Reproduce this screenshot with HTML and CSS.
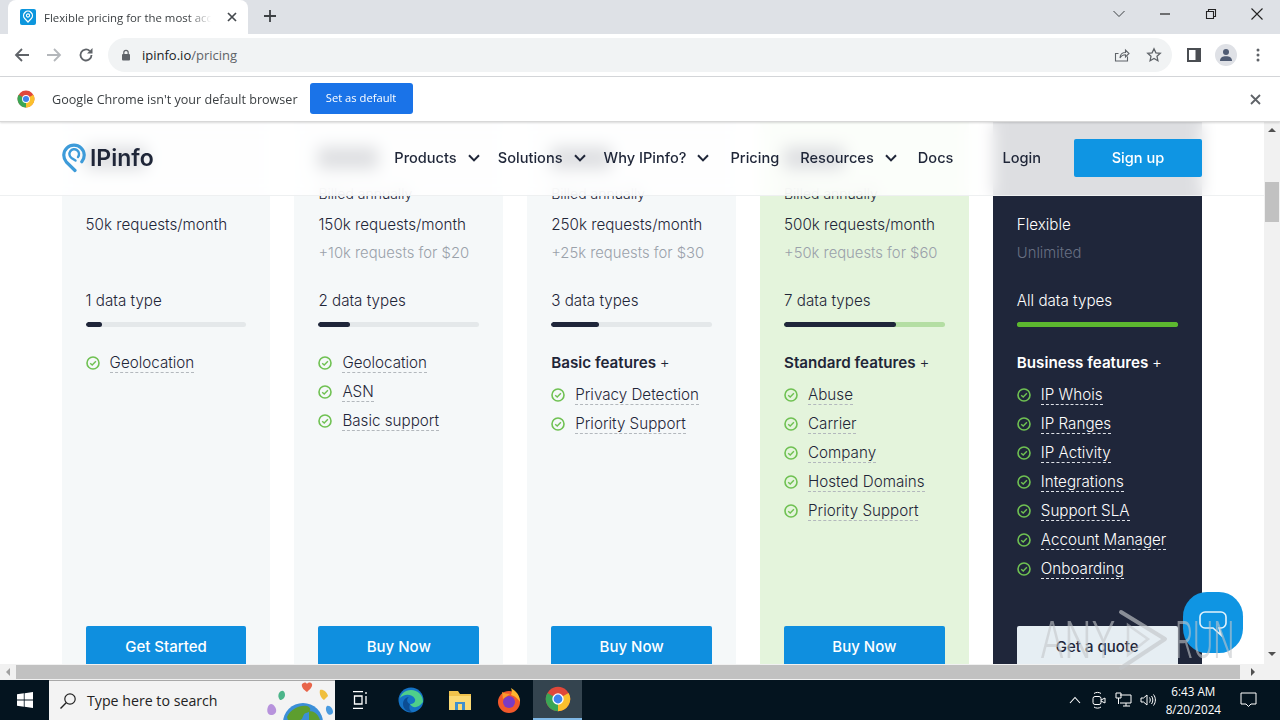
FILE: index.html
```html
<!DOCTYPE html>
<html lang="en">
<head>
    <meta charset="UTF-8">
    <title>Flexible pricing for the most accurate IP data</title>
    <link rel="stylesheet" href="styles.css">
</head>
<body>

<svg class="defs" width="0" height="0">
    <defs>
        <symbol id="chev" viewBox="0 0 12 8"><path d="M1 1.2 6 6.4l5-5.2" fill="none" stroke="currentColor" stroke-width="2"/></symbol>
        <symbol id="check" viewBox="0 0 14 14"><circle cx="7" cy="7" r="6" fill="none" stroke="#6fc152" stroke-width="1.6"/><path d="M4.2 7.2 6.2 9.1 9.9 5.2" fill="none" stroke="#6fc152" stroke-width="1.4"/></symbol>
        <symbol id="chrome" viewBox="0 0 32 32">
            <circle cx="16" cy="16" r="15" fill="#e0483a"/>
            <path d="M16 16 29 8.5A15 15 0 0 1 16 31Z" fill="#fbc02d"/>
            <path d="M16 16 16 31A15 15 0 0 1 3 8.5Z" fill="#3aa655"/>
            <circle cx="16" cy="16" r="7" fill="#fff"/>
            <circle cx="16" cy="16" r="5.4" fill="#3f83ee"/>
        </symbol>
    </defs>
</svg>

<!-- browser chrome -->
<div class="tabstrip">
    <div class="tab">
        <span class="favicon">
            <svg width="16" height="16" viewBox="0 0 16 16"><path d="M8 13 4.8 9.6a4.4 4.4 0 1 1 6.4 0Z" fill="none" stroke="#fff" stroke-width="1.3"/><circle cx="8" cy="6.5" r="1.6" fill="none" stroke="#fff" stroke-width="1.1"/></svg>
        </span>
        <span class="tab-title">Flexible pricing for the most accurate IP data</span>
        <svg class="tab-close" width="10" height="10" viewBox="0 0 10 10"><path d="M1 1l8 8M9 1 1 9" stroke="#45494e" stroke-width="1.7"/></svg>
    </div>
    <svg class="tab-new" width="14" height="14" viewBox="0 0 14 14"><path d="M7 1v12M1 7h12" stroke="#3c4043" stroke-width="1.8"/></svg>
    <div class="win-btns">
        <svg width="14" height="14" viewBox="0 0 14 14"><path d="M1.5 4 7 9.500 12.500 4" fill="none" stroke="#3c4043" stroke-width="1"/></svg>
        <svg width="14" height="14" viewBox="0 0 14 14"><path d="M2 7h10" stroke="#222" stroke-width="1.2"/></svg>
        <svg width="14" height="14" viewBox="0 0 14 14"><path d="M2.500 4.500h7v7h-7zM4.500 4.500v-2h7v7h-2" fill="none" stroke="#222" stroke-width="1.1"/></svg>
        <svg width="14" height="14" viewBox="0 0 14 14"><path d="M1.500 1.500l11 11M12.500 1.500l-11 11" stroke="#222" stroke-width="1.1"/></svg>
    </div>
</div>

<div class="toolbar">
    <svg class="tool" width="16" height="16" viewBox="0 0 16 16"><path d="M15 8H2M8 2 2 8l6 6" fill="none" stroke="#5f6368" stroke-width="1.800"/></svg>
    <svg class="tool" width="16" height="16" viewBox="0 0 16 16"><path d="M1 8h13M8 2l6 6-6 6" fill="none" stroke="#b4b7bb" stroke-width="1.800"/></svg>
    <svg class="tool" width="16" height="16" viewBox="0 0 16 16"><path d="M13.500 8A5.500 5.500 0 1 1 11.700 3.900" fill="none" stroke="#5f6368" stroke-width="1.800"/><path d="M14.500 1v5.500H9z" fill="#5f6368"/></svg>
    <div class="omnibox">
        <svg width="12" height="12" viewBox="0 0 12 12"><rect x="2" y="5" width="8" height="6.500" rx="1" fill="#5f6368"/><path d="M3.800 5V3.500a2.200 2.200 0 0 1 4.400 0V5" fill="none" stroke="#5f6368" stroke-width="1.200"/></svg>
        <span class="url">ipinfo.io<span class="url-path">/pricing</span></span>
        <svg class="omni-share" width="16" height="16" viewBox="0 0 16 16"><path d="M13.500 9.500v4.500h-12V6.500h3M6 11c0-4 3-5.500 5.500-5.500V3L15 6.500 11.500 10V7.800C9 7.800 7 9 6 11Z" fill="none" stroke="#5f6368" stroke-width="1.100"/></svg>
        <svg width="16" height="16" viewBox="0 0 16 16"><path d="M8 1.800l1.900 4 4.400.5-3.300 3 .9 4.400L8 11.500l-3.900 2.200.9-4.400-3.300-3 4.400-.5Z" fill="none" stroke="#5f6368" stroke-width="1.300"/></svg>
    </div>
    <svg class="tool-panel" width="14" height="14" viewBox="0 0 14 14"><path d="M0 0h14v14H0z" fill="#4a4d52"/><path d="M2 2h6.500v10H2z" fill="#fff"/></svg>
    <span class="avatar">
        <svg width="14" height="14" viewBox="0 0 14 14"><circle cx="7" cy="4" r="3" fill="#4f5b73"/><path d="M1 13c0-3.500 2.500-4.700 6-4.700s6 1.200 6 4.700z" fill="#4f5b73"/></svg>
    </span>
    <svg class="tool-menu" width="4" height="14" viewBox="0 0 4 14"><circle cx="2" cy="2" r="1.500" fill="#5f6368"/><circle cx="2" cy="7" r="1.500" fill="#5f6368"/><circle cx="2" cy="12" r="1.500" fill="#5f6368"/></svg>
</div>

<div class="infobar">
    <svg class="info-logo" width="18" height="18"><use href="#chrome"/></svg>
    <span class="info-text">Google Chrome isn't your default browser</span>
    <span class="info-btn">Set as default</span>
    <svg class="info-close" width="11" height="11" viewBox="0 0 11 11"><path d="M1 1l9 9M10 1l-9 9" stroke="#5f6368" stroke-width="1.800"/></svg>
</div>

<!-- page -->
<div class="viewport">
    <div class="page">
        <div class="plans">
            <div class="plan">
                <div class="price"></div>
                <div class="billed"></div>
                <div class="quota">50k requests/month</div>
                <div class="quota quota-extra"></div>
                <div class="types">1 data type</div>
                <div class="bar"><div class="bar-fill" style="width: 16px"></div></div>
                <ul class="feats">
                    <li><svg width="14" height="14"><use href="#check"/></svg><span>Geolocation</span></li>
                </ul>
                <a class="buy">Get Started</a>
            </div>
            <div class="plan">
                <div class="price"></div>
                <div class="billed">Billed annually</div>
                <div class="quota">150k requests/month</div>
                <div class="quota quota-extra">+10k requests for $20</div>
                <div class="types">2 data types</div>
                <div class="bar"><div class="bar-fill" style="width: 32px"></div></div>
                <ul class="feats">
                    <li><svg width="14" height="14"><use href="#check"/></svg><span>Geolocation</span></li>
                    <li><svg width="14" height="14"><use href="#check"/></svg><span>ASN</span></li>
                    <li><svg width="14" height="14"><use href="#check"/></svg><span>Basic support</span></li>
                </ul>
                <a class="buy">Buy Now</a>
            </div>
            <div class="plan">
                <div class="price"></div>
                <div class="billed">Billed annually</div>
                <div class="quota">250k requests/month</div>
                <div class="quota quota-extra">+25k requests for $30</div>
                <div class="types">3 data types</div>
                <div class="bar"><div class="bar-fill" style="width: 48px"></div></div>
                <div class="feat-title">Basic features <i>+</i></div>
                <ul class="feats feats-after">
                    <li><svg width="14" height="14"><use href="#check"/></svg><span>Privacy Detection</span></li>
                    <li><svg width="14" height="14"><use href="#check"/></svg><span>Priority Support</span></li>
                </ul>
                <a class="buy">Buy Now</a>
            </div>
            <div class="plan plan-green">
                <div class="price"></div>
                <div class="billed">Billed annually</div>
                <div class="quota">500k requests/month</div>
                <div class="quota quota-extra">+50k requests for $60</div>
                <div class="types">7 data types</div>
                <div class="bar"><div class="bar-fill" style="width: 112px"></div></div>
                <div class="feat-title">Standard features <i>+</i></div>
                <ul class="feats feats-after">
                    <li><svg width="14" height="14"><use href="#check"/></svg><span>Abuse</span></li>
                    <li><svg width="14" height="14"><use href="#check"/></svg><span>Carrier</span></li>
                    <li><svg width="14" height="14"><use href="#check"/></svg><span>Company</span></li>
                    <li><svg width="14" height="14"><use href="#check"/></svg><span>Hosted Domains</span></li>
                    <li><svg width="14" height="14"><use href="#check"/></svg><span>Priority Support</span></li>
                </ul>
                <a class="buy">Buy Now</a>
            </div>
            <div class="plan plan-dark">
                <div class="price"></div>
                <div class="billed"></div>
                <div class="quota">Flexible</div>
                <div class="quota quota-extra">Unlimited</div>
                <div class="types">All data types</div>
                <div class="bar"><div class="bar-fill" style="width: 100%"></div></div>
                <div class="feat-title">Business features <i>+</i></div>
                <ul class="feats feats-after">
                    <li><svg width="14" height="14"><use href="#check"/></svg><span>IP Whois</span></li>
                    <li><svg width="14" height="14"><use href="#check"/></svg><span>IP Ranges</span></li>
                    <li><svg width="14" height="14"><use href="#check"/></svg><span>IP Activity</span></li>
                    <li><svg width="14" height="14"><use href="#check"/></svg><span>Integrations</span></li>
                    <li><svg width="14" height="14"><use href="#check"/></svg><span>Support SLA</span></li>
                    <li><svg width="14" height="14"><use href="#check"/></svg><span>Account Manager</span></li>
                    <li><svg width="14" height="14"><use href="#check"/></svg><span>Onboarding</span></li>
                </ul>
                <a class="buy">Get a quote</a>
            </div>
        </div>

        <div class="site-head">
            <div class="logo">
                <svg width="24" height="30" viewBox="0 0 24 30"><path d="M13 27.500 4.200 18.800a10.200 10.200 0 1 1 15.600 0" fill="none" stroke="#3d9bd9" stroke-width="3.200" stroke-linecap="round"/><path d="M13.500 17.500 9.500 15a4.800 4.800 0 1 1 6.500-1" fill="none" stroke="#3d9bd9" stroke-width="2.400" stroke-linecap="round"/></svg>
                <span>IPinfo</span>
            </div>
            <nav class="nav">
                <a class="nav-tight">Products<svg width="12" height="8"><use href="#chev"/></svg></a>
                <a class="nav-tight">Solutions<svg width="12" height="8"><use href="#chev"/></svg></a>
                <a>Why IPinfo?<svg width="12" height="8"><use href="#chev"/></svg></a>
                <a>Pricing</a>
                <a>Resources<svg width="12" height="8"><use href="#chev"/></svg></a>
                <a>Docs</a>
                <a class="login">Login</a>
                <a class="signup">Sign up</a>
            </nav>
        </div>

        <div class="chat">
            <svg width="32" height="32" viewBox="0 0 32 32"><path d="M8 5h16a5 5 0 0 1 5 5v6a5 5 0 0 1-5 5h-2l2 7-8-7H8a5 5 0 0 1-5-5v-6a5 5 0 0 1 5-5Z" fill="none" stroke="#e4f3fc" stroke-width="1.600"/></svg>
        </div>
    </div>
    <div class="vscroll">
        <i class="arrow-up"></i>
        <i class="vthumb"></i>
        <i class="arrow-down"></i>
    </div>
</div>

<div class="hscroll">
    <i class="arrow-left"></i>
    <i class="hthumb"></i>
    <i class="arrow-right"></i>
</div>

<!-- taskbar -->
<div class="taskbar">
    <span class="start">
        <svg width="16" height="16" viewBox="0 0 16 16"><path d="M0 2.300 6.800 1.300v6.300H0zM7.600 1.200 16 0v7.600H7.600zM0 8.400h6.800v6.300L0 13.700zM7.600 8.400H16V16l-8.400-1.200z" fill="#fff"/></svg>
    </span>
    <div class="search">
        <svg width="18" height="18" viewBox="0 0 18 18"><circle cx="11" cy="7" r="5.200" fill="none" stroke="#222" stroke-width="1.200"/><path d="M7.200 10.800 1.500 16.500" stroke="#222" stroke-width="1.400"/></svg>
        <span>Type here to search</span>
        <svg class="search-art" width="74" height="39" viewBox="0 0 74 39">
            <circle cx="42" cy="42" r="20" fill="#3b8fd8"/>
            <path d="M26 36c4-8 12-12 20-11 5 2 4 6-1 7-4 1-2 6-6 7H27Z" fill="#5d9e2f"/>
            <path d="M48 30c5 0 9 3 11 9H48Z" fill="#5d9e2f"/>
            <path d="M41 3c2-2 4-2 5 0 1-2 4-2 5 0 1 3-3 6-5 8-3-2-6-5-5-8Z" fill="#e8654a"/>
            <path d="M18 12c3-4 6-2 6 2 0 3-3 5-5 5-2-2-2-5-1-7Z" fill="#4cb58a"/>
            <path d="M59 9c3-1 7 2 8 6l-4 4c-3-2-5-6-4-10Z" fill="#f0bf3c"/>
            <path d="M8 24c3-3 6 1 7 4 1 4-2 6-5 6-4 0-5-6-2-10Z" fill="#b792dc"/>
            <path d="M66 25c3-1 6 3 6 6 0 2-3 4-5 2-2-2-3-6-1-8Z" fill="#4a9be0"/>
        </svg>
    </div>
    <span class="task task-view">
        <svg width="16" height="18" viewBox="0 0 16 18"><path d="M1 .500h10M1 17.500h10M2.500 5h7.500v8H2.500zM14 1v2M14 5v8" fill="none" stroke="#fff" stroke-width="1.300"/></svg>
    </span>
    <span class="task">
        <svg width="26" height="26" viewBox="0 0 26 26"><circle cx="13" cy="13" r="12.500" fill="#1573c5"/><path d="M25 15c0-7-5-12-12-12C7 3 3 7 2 11c3-4 12-5 15 1 1 3-2 5-5 5 2 4 8 5 13-2Z" fill="#4fcf8a"/><path d="M12 17c-3-1-4-5-1-7-3 0-6 3-6 7 0 4 3 8 9 8-3-2-3-5-2-8Z" fill="#0b4d94"/></svg>
    </span>
    <span class="task">
        <svg width="24" height="22" viewBox="0 0 24 22"><path d="M1 2h9l2 3h11v16H1Z" fill="#f0c24c"/><path d="M1 7h22v14H1Z" fill="#fbd974"/><path d="M7 13h10v8H7Z" fill="#3f8fcd"/><path d="M10 15h4v6h-4Z" fill="#fbd974"/></svg>
    </span>
    <span class="task">
        <svg width="26" height="26" viewBox="0 0 26 26"><circle cx="13" cy="15" r="11" fill="#f2592b"/><path d="M15 1c5 3 9 7 9 14-2-3-5-6-9-7 1-2 1-5 0-7Z" fill="#fdb52d"/><circle cx="13" cy="15" r="6" fill="#7a3bc4"/><path d="M6 5c2 1 5 2 8 2-2 2-5 3-7 5Z" fill="#f99b2d"/></svg>
    </span>
    <span class="task task-active">
        <svg width="26" height="26"><use href="#chrome"/></svg>
    </span>
    <div class="tray">
        <svg class="tray-caret" width="12" height="8" viewBox="0 0 12 8"><path d="M1 7 6 1.500 11 7" fill="none" stroke="#fff" stroke-width="1.100"/></svg>
        <svg width="16" height="18" viewBox="0 0 16 18"><rect x="2" y="5.500" width="8" height="8" rx="2" fill="none" stroke="#fff"/><path d="M10 9l4-2v5l-4-2M3 2.500c2-1.500 5-1.500 7 0M3 16c2 1.500 5 1.500 7 0" fill="none" stroke="#fff"/></svg>
        <svg width="17" height="16" viewBox="0 0 17 16"><path d="M5 3h11v8H5M8 14h7M11 11v3M1 1h5v5H1zM3.500 6v6" fill="none" stroke="#fff"/></svg>
        <svg width="16" height="14" viewBox="0 0 16 14"><path d="M1 5h2.500L7 2v10L3.500 9H1zM9.500 4.500c1 1.500 1 3.500 0 5M11.500 3c1.800 2.300 1.800 5.700 0 8M13.500 1.500c2.500 3.300 2.500 7.700 0 11" fill="none" stroke="#fff"/></svg>
        <div class="clock"><span>6:43 AM</span><span>8/20/2024</span></div>
        <svg class="notif" width="17" height="16" viewBox="0 0 17 16"><path d="M1 1h15v11h-5l-2.500 2.500L6 12H1Z" fill="none" stroke="#fff"/></svg>
    </div>
</div>

<!-- sandbox watermark -->
<div class="watermark">
    <span class="wm-any">ANY</span>
    <svg width="50" height="62" viewBox="0 0 50 62"><path d="M3 3 47 30 3 59" fill="none" stroke="rgba(195,198,202,.65)" stroke-width="4" stroke-linejoin="round" stroke-linecap="round"/><path d="M10 16 30 30 10 46Z" fill="none" stroke="rgba(195,198,202,.5)" stroke-width="2.500"/></svg>
    <span class="wm-run">RUN</span>
</div>

</body>
</html>
```

FILE: styles.css
```css
* { box-sizing: border-box; }
html, body { margin: 0; height: 720px; overflow: hidden; }
body {
    display: flex;
    flex-direction: column;
    position: relative;
    background: #fff;
    font-family: "Inter", "Liberation Sans", sans-serif;
    color: #1f2638;
}
.defs { position: absolute; }

/* browser chrome */
.tabstrip {
    display: flex;
    align-items: flex-end;
    height: 34px;
    padding-left: 8px;
    background: #dee1e6;
    flex: none;
}
.tab {
    display: flex;
    align-items: center;
    width: 240px;
    height: 34px;
    padding: 0 11px 0 12px;
    background: #fff;
    border-radius: 8px 8px 0 0;
}
.favicon {
    display: flex;
    width: 16px;
    height: 16px;
    background: #0c96dd;
    border-radius: 2px;
    flex: none;
}
.tab-title {
    flex: 1;
    margin-left: 8px;
    overflow: hidden;
    white-space: nowrap;
    font: 11.400px "Open Sans", "Liberation Sans", sans-serif;
    color: #3c4043;
    -webkit-mask-image: linear-gradient(to right, #000 85%, transparent 99%);
    mask-image: linear-gradient(to right, #000 85%, transparent 99%);
}
.tab-close { margin-left: 14px; flex: none; }
.tab-new { margin: 0 0 11px 15px; }
.win-btns {
    display: flex;
    gap: 32px;
    margin: 0 16px 13px auto;
}
.toolbar {
    display: flex;
    align-items: center;
    height: 43px;
    padding-left: 14px;
    border-bottom: 1px solid #d5d7da;
    background: #fff;
    flex: none;
}
.tool { margin-right: 16px; }
.omnibox {
    display: flex;
    align-items: center;
    width: 1064px;
    height: 34px;
    margin-left: -2px;
    padding: 0 10px 0 12px;
    background: #f1f3f4;
    border-radius: 17px;
}
.url {
    margin-left: 10px;
    font: 13px "Open Sans", "Liberation Sans", sans-serif;
    color: #202124;
}
.url-path { color: #5f6368; }
.omni-share { margin: 0 16px 0 auto; }
.tool-panel { margin-left: 15px; }
.avatar {
    display: flex;
    align-items: center;
    justify-content: center;
    width: 22px;
    height: 22px;
    margin-left: 14px;
    background: #dfe1e6;
    border-radius: 50%;
}
.tool-menu { margin-left: 19px; }
.infobar {
    display: flex;
    align-items: center;
    height: 45px;
    padding-left: 17px;
    background: #fff;
    border-bottom: 1px solid #d8d8d8;
    box-shadow: 0 1px 2px rgba(0,0,0,.15);
    position: relative;
    z-index: 3;
    flex: none;
}
.info-text {
    margin-left: 17px;
    font: 12.600px "Open Sans", "Liberation Sans", sans-serif;
    color: #3c4043;
}
.info-btn {
    display: flex;
    align-items: center;
    justify-content: center;
    width: 103px;
    height: 31px;
    margin: -2px 0 0 12px;
    padding-bottom: 2px;
    background: #1a73e8;
    border-radius: 3px;
    color: #fff;
    font: 11.200px "Open Sans", "Liberation Sans", sans-serif;
}
.info-close { margin: 0 19px 0 auto; }

/* page */
.viewport {
    display: flex;
    height: 542px;
    flex: none;
}
.page {
    position: relative;
    width: 1264px;
    height: 542px;
    padding: 0 62.400px 0 61.600px;
    overflow: hidden;
}
.plans {
    display: grid;
    grid-template-columns: repeat(5, 1fr);
    gap: 24px;
}
.plan {
    display: flex;
    flex-direction: column;
    height: 570px;
    padding: 20px 24px 24px;
    background: #f5f8f9;
    font-weight: 300;
    font-size: 15.200px;
}
.plan-green { background: #e4f4dc; }
.plan-dark { background: #1f263a; color: #fff; }
/* price figure only ever shows as a smudge through the blurred header */
.price {
    width: 60px;
    height: 22px;
    margin: 5px 0;
    background: #1f2638;
}
.plan-dark .price { visibility: hidden; }
.billed { height: 20px; margin-top: 10px; font-size: 14px; line-height: 20px; }
.quota { height: 28px; line-height: 28px; white-space: nowrap; }
.billed + .quota { margin-top: 7px; }
.quota-extra { color: #9aa1aa; font-size: 14.800px; }
.plan-dark .quota-extra { color: #687083; }
.types { height: 28px; margin-top: 20px; line-height: 28px; }
.bar {
    height: 5px;
    margin-top: 7px;
    background: #e4e8ea;
    border-radius: 3px;
    overflow: hidden;
}
.bar-fill { height: 100%; background: #1f263a; border-radius: 3px; }
.plan-green .bar { background: #b4dea3; }
.plan-dark .bar { background: #5cb82f; }
.plan-dark .bar-fill { background: #5cb82f; }
.feat-title {
    height: 29px;
    margin-top: 21px;
    line-height: 29px;
    font-weight: 600;
    white-space: nowrap;
}
.feat-title i { font-style: normal; font-weight: 300; }
.feats {
    margin: 21px 0 0;
    padding: 0;
    list-style: none;
}
.feats-after { margin-top: 3px; }
.feats li {
    display: flex;
    align-items: center;
    height: 29px;
    gap: 10px;
}
.feats li span {
    line-height: 19px;
    border-bottom: 1px dashed #b3b8bd;
    white-space: nowrap;
}
.plan-dark .feats li span { border-bottom-color: #dfe2e8; }
.buy {
    display: flex;
    align-items: center;
    justify-content: center;
    flex: none;
    height: 42px;
    margin-top: auto;
    padding-bottom: 2px;
    background: #0f8fdf;
    border-radius: 2px;
    color: #fff;
    font-weight: 500;
    font-size: 15px;
}
.plan-dark .buy { background: #e6eef3; color: #1f263a; }

/* floating site header */
.site-head {
    position: absolute;
    left: 0;
    top: 0;
    right: 0;
    display: flex;
    align-items: center;
    height: 74px;
    padding: 0 62px 2px;
    background: rgba(255,255,255,.85);
    -webkit-backdrop-filter: blur(8px);
    backdrop-filter: blur(8px);
    border-bottom: 1px solid #eef0f1;
}
.logo {
    display: flex;
    align-items: center;
    font-size: 23px;
    font-weight: 600;
    color: #1f2638;
}
.logo svg { margin-right: 4px; }
.nav {
    display: flex;
    align-items: center;
    gap: 21px;
    margin-left: auto;
    font-size: 14.600px;
    font-weight: 500;
}
.nav a { display: flex; align-items: center; gap: 11px; }
.nav .nav-tight { margin-right: -3px; }
.nav .login { margin-left: 28px; }
.nav .signup {
    justify-content: center;
    width: 128px;
    height: 38px;
    margin-left: 12px;
    background: #0f95e3;
    border-radius: 2px;
    color: #fff;
}
.chat {
    position: absolute;
    left: 1183px;
    top: 470px;
    display: flex;
    align-items: center;
    justify-content: center;
    width: 60px;
    height: 61px;
    background: #0f95e3;
    border-radius: 40%;
}

/* scrollbars */
.vscroll {
    position: relative;
    width: 16px;
    background: #f1f1f1;
}
.vthumb {
    position: absolute;
    left: 1px;
    top: 60px;
    width: 14px;
    height: 40px;
    background: #c1c1c1;
}
.arrow-up, .arrow-down, .arrow-left, .arrow-right {
    position: absolute;
    width: 0;
    height: 0;
    border: 4px solid transparent;
}
.arrow-up { left: 4px; top: 2px; border-bottom-color: #505050; }
.arrow-down { left: 4px; bottom: 4px; border-top-color: #505050; }
.hscroll {
    position: relative;
    height: 16px;
    background: #f1f1f1;
    flex: none;
}
.hthumb {
    position: absolute;
    left: 16px;
    top: 1px;
    width: 1224px;
    height: 14px;
    background: #c1c1c1;
}
.arrow-left { left: 2px; top: 4px; border-right-color: #a0a0a0; }
.arrow-right { left: 1251px; top: 4px; border-left-color: #505050; }

/* taskbar */
.taskbar {
    display: flex;
    align-items: center;
    height: 40px;
    background: #04141f;
    color: #fff;
    flex: none;
}
.start {
    display: flex;
    align-items: center;
    justify-content: center;
    width: 49px;
    height: 40px;
}
.search {
    display: flex;
    align-items: center;
    width: 286px;
    height: 40px;
    padding-left: 10px;
    overflow: hidden;
    background: #f3f3f3;
    border-top: 1px solid #a8a8a8;
    color: #222;
    font: 14.200px "Open Sans", "Liberation Sans", sans-serif;
}
.search span { margin-left: 10px; }
.search-art { margin-left: auto; align-self: flex-end; }
.task {
    display: flex;
    align-items: center;
    justify-content: center;
    width: 49px;
    height: 40px;
}
.task-view { margin-right: 2px; }
.task-active { background: #34444f; border-bottom: 2px solid #7fb8e6; }
.tray {
    display: flex;
    align-items: center;
    margin-left: auto;
    gap: 8px;
}
.tray-caret { margin-right: 2px; }
.clock {
    display: flex;
    flex-direction: column;
    align-items: center;
    margin-left: 2px;
    font: 11.700px/18px "Open Sans", "Liberation Sans", sans-serif;
}
.notif { margin: 0 23px 0 11px; }

/* sandbox watermark */
.watermark {
    position: absolute;
    left: 1040px;
    top: 609px;
    display: flex;
    align-items: center;
    height: 62px;
    font: 300 50px/62px "Inter", sans-serif;
    color: rgba(195,198,202,.6);
    pointer-events: none;
    z-index: 5;
}
.watermark svg { margin: 0 7px 0 6px; }
.watermark span { display: block; transform-origin: left center; white-space: nowrap; }
.wm-any { width: 72px; transform: scaleX(.72); }
.wm-run { width: 58px; transform: scaleX(.56); }
```
